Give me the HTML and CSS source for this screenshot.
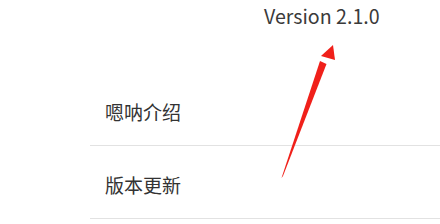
FILE: index.html
```html
<!DOCTYPE html>
<html lang="zh-CN">
<head>
    <meta charset="UTF-8">
    <meta name="viewport" content="width=device-width, initial-scale=1.0">
    <title>关于</title>
    <link rel="stylesheet" href="styles.css">
</head>
<body>
    <div class="page">
        <div class="version">Version 2.1.0</div>

        <ul class="menu">
            <li class="menu-item">嗯呐介绍</li>
            <li class="menu-item">版本更新</li>
        </ul>

        <!-- Annotation arrow -->
        <svg class="arrow" width="440" height="224" viewBox="0 0 440 224">
            <polygon points="281.5,178 320,61 326.5,64 283,176" fill="#f0201a"/>
            <polygon points="333,45 321,56 335,60" fill="#f0201a"/>
        </svg>
    </div>
</body>
</html>
```

FILE: styles.css
```css
/* Reset */
* {
    margin: 0;
    padding: 0;
    box-sizing: border-box;
}

body {
    background: #fff;
    color: #333;
    font-family: "Noto Sans CJK SC", "Noto Sans", sans-serif;
}

.page {
    position: relative;
    width: 440px;
    height: 224px;
    overflow: hidden;
}

/* Version header */
.version {
    height: 73px;
    padding: 0 0 0 264px;
    font-size: 19.6px;
    line-height: 32px;
    color: #3a3a3a;
}

/* Menu list */
.menu {
    list-style: none;
    margin-left: 90px;
}

.menu-item {
    height: 73px;
    padding-left: 15px;
    display: flex;
    align-items: center;
    padding-top: 4px;
    font-size: 19px;
    border-bottom: 1px solid #e2e2e2;
}

.arrow {
    position: absolute;
    top: 0;
    left: 0;
    pointer-events: none;
}
```
